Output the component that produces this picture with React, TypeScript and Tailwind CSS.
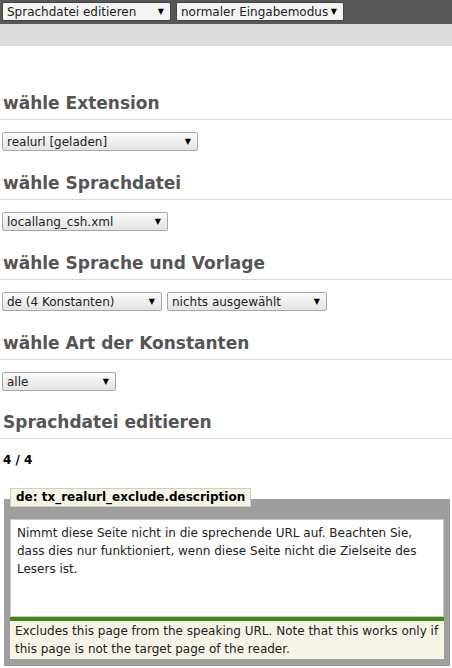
import { type FC } from 'react';

const Select: FC<{ label: string; width: string; dark?: boolean }> = ({ label, width, dark }) => (
  <div
    className={`${width} h-[19px] flex items-center justify-between pl-[4px] pr-[6px] border whitespace-nowrap ${
      dark ? 'border-[#444] bg-[#f4f4f4]' : 'border-[#a9a9a9] bg-gradient-to-b from-[#fafafa] to-[#e4e4e4]'
    } text-[12px] leading-none text-[#222] rounded-[2px]`}
  >
    <span>{label}</span>
    <span className="text-[8px] text-black">▼</span>
  </div>
);

const Heading: FC<{ title: string }> = ({ title }) => (
  <h2 className="text-[17px] font-bold text-[#555] leading-[21px] pl-[3px] pb-[5px] border-b border-[#d8d8d8]">
    {title}
  </h2>
);

const Section: FC<{ title: string; children?: React.ReactNode }> = ({ title, children }) => (
  <div>
    <Heading title={title} />
    <div className="pt-[12px] pl-[2px] flex gap-[5px]">{children}</div>
  </div>
);

const App: FC = () => {
  return (
    <div className="w-[452px] h-[668px] bg-white overflow-hidden" style={{ fontFamily: '"DejaVu Sans", Verdana, sans-serif' }}>
      <div className="h-[24px] bg-[#575757] flex items-start gap-[5px] pl-[2px] pt-[2px]">
        <Select label="Sprachdatei editieren" width="w-[169px]" dark />
        <Select label="normaler Eingabemodus" width="w-[168px]" dark />
      </div>
      <div className="h-[22px] bg-[#dcdcdc]" />

      <div className="pt-[47px] flex flex-col gap-[22px]">
        <Section title="wähle Extension">
          <Select label="realurl [geladen]" width="w-[196px]" />
        </Section>
        <Section title="wähle Sprachdatei">
          <Select label="locallang_csh.xml" width="w-[166px]" />
        </Section>
        <Section title="wähle Sprache und Vorlage">
          <Select label="de (4 Konstanten)" width="w-[160px]" />
          <Select label="nichts ausgewählt" width="w-[160px]" />
        </Section>
        <Section title="wähle Art der Konstanten">
          <Select label="alle" width="w-[114px]" />
        </Section>
        <div className="-mt-[1px]">
          <Heading title="Sprachdatei editieren" />
          <div className="pt-[14px] pl-[3px] text-[12px] leading-[14px] font-bold text-black">4 / 4</div>
        </div>
      </div>

      <div className="mt-[17px] mx-[4px]">
        <div className="relative z-10 ml-[6px] inline-block bg-[#f6f3e7] border border-[#d0cdbf] px-[5px] h-[19px] text-[12px] font-bold leading-[17px] text-black">
          de: tx_realurl_exclude.description
        </div>
        <div className="-mt-[9px] w-[446px] bg-[#9e9e9e] px-[6px] pt-[20px] pb-[7px]">
          <div className="bg-white border border-[#c8c8c8] h-[98px] px-[6px] pt-[4px] text-[12px] leading-[18px] text-[#222]">
            Nimmt diese Seite nicht in die sprechende URL auf. Beachten Sie, dass dies nur funktioniert, wenn diese Seite nicht die Zielseite des Lesers ist.
          </div>
          <div className="h-[4px] bg-[#3f8a18]" />
          <div className="bg-[#f6f3e7] px-[5px] pt-[1px] pb-[1px] text-[12px] leading-[18px] text-[#222]">
            Excludes this page from the speaking URL. Note that this works only if this page is not the target page of the reader.
          </div>
        </div>
      </div>
    </div>
  );
};

export default App;
